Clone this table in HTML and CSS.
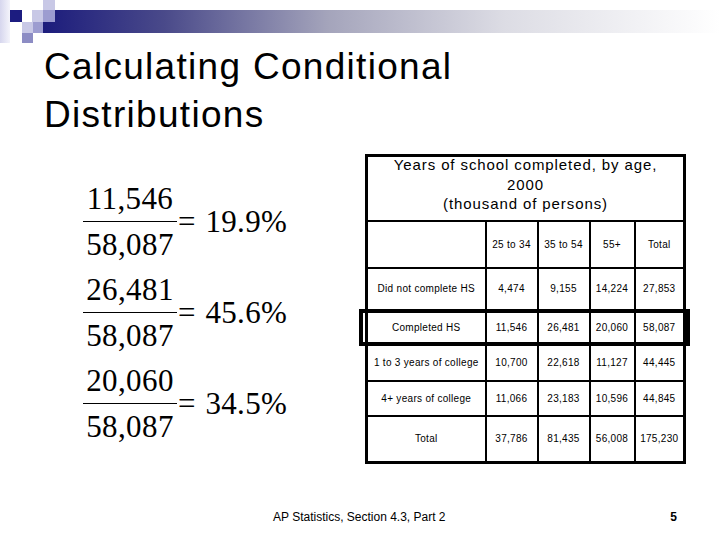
FILE: index.html
```html
<!DOCTYPE html>
<html lang="en">
<head>
<meta charset="utf-8">
<title>Calculating Conditional Distributions</title>
<link rel="stylesheet" href="styles.css">
</head>
<body>
<div class="slide">
  <svg class="band" width="720" height="43" viewBox="0 0 720 43" aria-hidden="true">
    <defs>
      <linearGradient id="bar" x1="0" y1="0" x2="1" y2="0">
        <stop offset="0" stop-color="#1c1c7c"/>
        <stop offset="0.18" stop-color="#4a4a8a"/>
        <stop offset="0.42" stop-color="#a4a4bb"/>
        <stop offset="0.68" stop-color="#dcdce4"/>
        <stop offset="1" stop-color="#ffffff"/>
      </linearGradient>
      <linearGradient id="strip" x1="0" y1="0" x2="1" y2="0">
        <stop offset="0" stop-color="#d6d6ee"/>
        <stop offset="1" stop-color="#f4f4fb"/>
      </linearGradient>
    </defs>
    <rect x="0" y="0" width="10" height="43" fill="url(#strip)"/>
    <rect x="43" y="10" width="677" height="23" fill="url(#bar)"/>
    <rect x="10" y="10" width="12" height="12" fill="#1c1c80"/>
    <rect x="32" y="10" width="11" height="12" fill="#c8c8e6"/>
    <rect x="43" y="0" width="12" height="10" fill="#c8c8e6"/>
    <rect x="43" y="10" width="12" height="12" fill="#9c9cd0"/>
    <rect x="22" y="22" width="11" height="11" fill="#c8c8e6"/>
    <rect x="33" y="22" width="10" height="11" fill="#9c9cd0"/>
    <rect x="22" y="33" width="11" height="10" fill="#8c8cc4"/>
  </svg>

  <h1 class="title">Calculating Conditional<br>Distributions</h1>

  <div class="main">
    <div class="formulas">
      <div class="eq">
        <div class="frac"><span class="num">11,546</span><span class="den">58,087</span></div>
        <span class="eqsign">=</span><span class="res">19.9%</span>
      </div>
      <div class="eq">
        <div class="frac"><span class="num">26,481</span><span class="den">58,087</span></div>
        <span class="eqsign">=</span><span class="res">45.6%</span>
      </div>
      <div class="eq">
        <div class="frac"><span class="num">20,060</span><span class="den">58,087</span></div>
        <span class="eqsign">=</span><span class="res">34.5%</span>
      </div>
    </div>

    <div class="tablewrap">
      <table class="data">
        <colgroup>
          <col class="c-label"><col class="c-num"><col class="c-num"><col class="c-narrow"><col class="c-tot">
        </colgroup>
        <tr class="r-title"><td colspan="5"><div class="ttl">Years of school completed, by age,<br>2000<br>(thousand of persons)</div></td></tr>
        <tr class="r-head"><td></td><td>25 to 34</td><td>35 to 54</td><td>55+</td><td>Total</td></tr>
        <tr class="r-a"><td>Did not complete HS</td><td>4,474</td><td>9,155</td><td>14,224</td><td>27,853</td></tr>
        <tr class="r-b"><td>Completed HS</td><td>11,546</td><td>26,481</td><td>20,060</td><td>58,087</td></tr>
        <tr class="r-c"><td>1 to 3 years of college</td><td>10,700</td><td>22,618</td><td>11,127</td><td>44,445</td></tr>
        <tr class="r-b"><td>4+ years of college</td><td>11,066</td><td>23,183</td><td>10,596</td><td>44,845</td></tr>
        <tr class="r-tot"><td>Total</td><td>37,786</td><td>81,435</td><td>56,008</td><td>175,230</td></tr>
      </table>
      <div class="highlight"></div>
    </div>
  </div>

  <div class="footer">
    <span class="foot-text">AP Statistics, Section 4.3, Part 2</span>
    <span class="page">5</span>
  </div>
</div>
</body>
</html>
```
FILE: styles.css
```css
html, body {
  margin: 0;
  padding: 0;
  background: #ffffff;
}

.slide {
  width: 720px;
  height: 540px;
  overflow: hidden;
  display: flex;
  flex-direction: column;
  background: #ffffff;
  font-family: "Liberation Sans", Arial, sans-serif;
  color: #000000;
}

.band {
  display: block;
  flex: none;
}

.title {
  margin: 0;
  padding-left: 44px;
  font-family: "Liberation Sans", Arial, sans-serif;
  font-weight: normal;
  font-size: 37px;
  line-height: 48px;
  letter-spacing: 1.3px;
  height: 96px;
  flex: none;
}

.main {
  display: grid;
  grid-template-columns: 282px 340px;
  padding-left: 83px;
  flex: none;
}

/* formulas */
.formulas {
  margin-top: 44px;
  display: flex;
  flex-direction: column;
  gap: 14px;
  font-family: "Liberation Serif", "Times New Roman", serif;
  font-size: 31px;
  line-height: 31px;
}

.eq {
  display: flex;
  align-items: center;
}

.frac {
  display: flex;
  flex-direction: column;
  align-items: stretch;
  width: 94px;
  text-align: center;
}

.num {
  display: block;
  padding-bottom: 7px;
  border-bottom: 1.5px solid #000;
  letter-spacing: 0.4px;
}

.den {
  display: block;
  padding-top: 7px;
  letter-spacing: 0.4px;
}

.eqsign {
  margin-left: 1px;
  margin-right: 10px;
}

.res {
  letter-spacing: 0.3px;
}

/* table */
.tablewrap {
  position: relative;
  margin-top: 15px;
  width: 322px;
  align-self: start;
}

.data {
  border-collapse: collapse;
  table-layout: fixed;
  width: 321px;
  border: 3px solid #000;
  font-size: 10px;
  line-height: 12px;
  letter-spacing: 0.3px;
}

.data td {
  border: 2px solid #000;
  text-align: center;
  vertical-align: middle;
  padding: 0;
  white-space: nowrap;
}

.c-label { width: 119px; }
.c-num { width: 52px; }
.c-narrow { width: 45px; }
.c-tot { width: 50px; }

.r-title td {
  height: 63px;
  vertical-align: top;
}

.ttl {
  margin-top: -2px;
  font-size: 15px;
  line-height: 19.5px;
  letter-spacing: 0.9px;
}

.r-head td { height: 45px; }
.r-a td { height: 40px; }
.r-b td { height: 33px; }
.r-c td { height: 34px; }
.r-tot td { height: 44px; }

.highlight {
  position: absolute;
  left: -6px;
  top: 155px;
  width: 331px;
  height: 37px;
  border: 4px solid #000;
  box-sizing: border-box;
  pointer-events: none;
}

/* footer */
.footer {
  margin-top: auto;
  display: flex;
  align-items: baseline;
  padding-left: 273px;
  padding-right: 43px;
  padding-bottom: 16px;
  font-size: 12px;
  line-height: 14px;
}

.page {
  margin-left: auto;
  font-weight: 900;
}
```
